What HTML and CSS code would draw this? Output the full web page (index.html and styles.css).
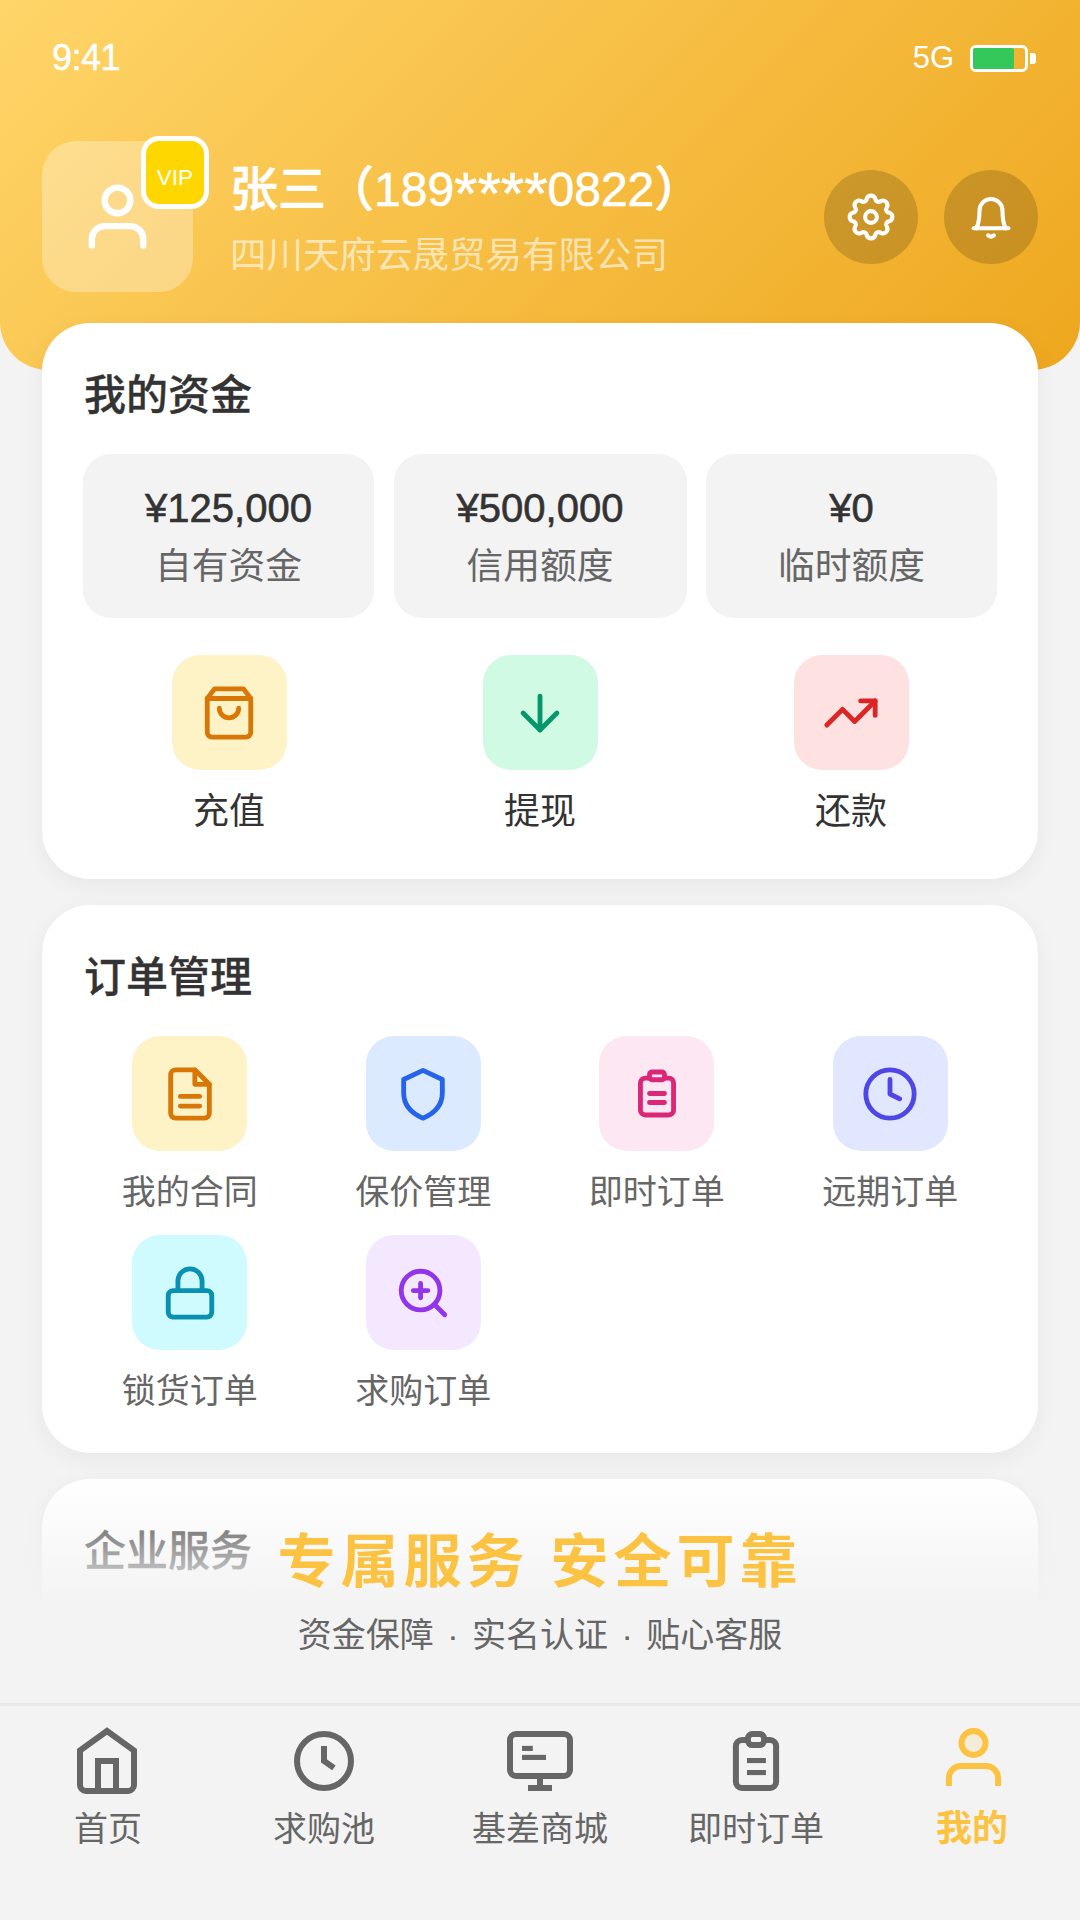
FILE: index.html
```html
<!DOCTYPE html>
<html lang="zh-CN">
<head>
    <meta charset="UTF-8">
    <meta name="viewport" content="width=device-width, initial-scale=1.0">
    <title>我的</title>
    <link rel="stylesheet" href="styles.css">
</head>
<body>
<div class="page">
    <header class="hero">
        <div class="status-bar">
            <span class="time">9:41</span>
            <div class="status-right">
                <span class="signal">5G</span>
                <span class="battery"><span class="battery-level"></span></span>
                <span class="battery-tip"></span>
            </div>
        </div>
        <div class="profile">
            <div class="avatar">
                <svg class="avatar-icon" viewBox="0 0 24 24" fill="none" stroke="#fff" stroke-width="2" stroke-linecap="round" stroke-linejoin="round">
                    <circle cx="12" cy="7" r="4"/>
                    <path d="M4 21v-2a4 4 0 0 1 4-4h8a4 4 0 0 1 4 4v2"/>
                </svg>
                <span class="vip">VIP</span>
            </div>
            <div class="profile-text">
                <div class="name">张三（189<span class="mask">****</span>0822）</div>
                <div class="company">四川天府云晟贸易有限公司</div>
            </div>
            <div class="round-btns">
                <button class="round-btn">
                    <svg viewBox="0 0 24 24" fill="none" stroke="#fff" stroke-width="1.9" stroke-linecap="round" stroke-linejoin="round">
                        <path d="M20.36 9.99A2.1 2.1 0 0 1 20.36 14.01A1.5 1.5 0 0 0 19.33 16.49A2.1 2.1 0 0 1 16.49 19.33A1.5 1.5 0 0 0 14.01 20.36A2.1 2.1 0 0 1 9.99 20.36A1.5 1.5 0 0 0 7.51 19.33A2.1 2.1 0 0 1 4.67 16.49A1.5 1.5 0 0 0 3.64 14.01A2.1 2.1 0 0 1 3.64 9.99A1.5 1.5 0 0 0 4.67 7.51A2.1 2.1 0 0 1 7.51 4.67A1.5 1.5 0 0 0 9.99 3.64A2.1 2.1 0 0 1 14.01 3.64A1.5 1.5 0 0 0 16.49 4.67A2.1 2.1 0 0 1 19.33 7.51A1.5 1.5 0 0 0 20.36 9.99z"/>
                        <circle cx="12" cy="12" r="2.7"/>
                    </svg>
                </button>
                <button class="round-btn">
                    <svg viewBox="0 0 24 24" fill="none" stroke="#fff" stroke-width="1.9" stroke-linecap="round" stroke-linejoin="round">
                        <path d="M4 17.200h16"/>
                        <path d="M5.200 17.200c1.200-2.200 1.500-4.500 1.500-8.200a5.300 5.300 0 0 1 10.600 0c0 3.700 .3 6 1.500 8.200"/>
                        <path d="M10.700 20.500a2 2 0 0 0 2.600 0"/>
                    </svg>
                </button>
            </div>
        </div>
    </header>

    <main class="content">
        <section class="card funds-card">
            <h2 class="card-title">我的资金</h2>
            <div class="funds">
                <div class="fund">
                    <div class="fund-value">¥125,000</div>
                    <div class="fund-label">自有资金</div>
                </div>
                <div class="fund">
                    <div class="fund-value">¥500,000</div>
                    <div class="fund-label">信用额度</div>
                </div>
                <div class="fund">
                    <div class="fund-value">¥0</div>
                    <div class="fund-label">临时额度</div>
                </div>
            </div>
            <div class="actions">
                <div class="action">
                    <div class="tile tile-amber">
                        <svg viewBox="0 0 24 24" fill="none" stroke="#d97706" stroke-width="2" stroke-linecap="round" stroke-linejoin="round">
                            <path d="M6 2 3 6v14a2 2 0 0 0 2 2h14a2 2 0 0 0 2-2V6l-3-4z"/>
                            <path d="M3 6h18"/>
                            <path d="M16 10a4 4 0 0 1-8 0"/>
                        </svg>
                    </div>
                    <span class="action-label">充值</span>
                </div>
                <div class="action">
                    <div class="tile tile-green">
                        <svg viewBox="0 0 24 24" fill="none" stroke="#059669" stroke-width="2" stroke-linecap="round" stroke-linejoin="round">
                            <path d="M12 5v14"/>
                            <path d="m19 12-7 7-7-7"/>
                        </svg>
                    </div>
                    <span class="action-label">提现</span>
                </div>
                <div class="action">
                    <div class="tile tile-red">
                        <svg viewBox="0 0 24 24" fill="none" stroke="#dc2626" stroke-width="2" stroke-linecap="round" stroke-linejoin="round">
                            <path d="m22 7-8.500 8.500-5-5L2 17"/>
                            <path d="M16 7h6v6"/>
                        </svg>
                    </div>
                    <span class="action-label">还款</span>
                </div>
            </div>
        </section>

        <section class="card orders-card">
            <h2 class="card-title">订单管理</h2>
            <div class="order-grid">
                <div class="order">
                    <div class="tile tile-amber">
                        <svg viewBox="0 0 24 24" fill="none" stroke="#d97706" stroke-width="2" stroke-linecap="round" stroke-linejoin="round">
                            <path d="M14 2H6a2 2 0 0 0-2 2v16a2 2 0 0 0 2 2h12a2 2 0 0 0 2-2V8z"/>
                            <path d="M14 2v6h6"/>
                            <path d="M8 13h8"/>
                            <path d="M8 17h8"/>
                        </svg>
                    </div>
                    <span class="order-label">我的合同</span>
                </div>
                <div class="order">
                    <div class="tile tile-blue">
                        <svg viewBox="0 0 24 24" fill="none" stroke="#2563eb" stroke-width="2" stroke-linecap="round" stroke-linejoin="round">
                            <path d="M12 2.200 20 6v5.500c0 5.200-3.400 8.600-8 10.500-4.600-1.900-8-5.300-8-10.500V6z"/>
                        </svg>
                    </div>
                    <span class="order-label">保价管理</span>
                </div>
                <div class="order">
                    <div class="tile tile-pink">
                        <svg viewBox="0 0 24 24" fill="none" stroke="#db2777" stroke-width="2" stroke-linecap="round" stroke-linejoin="round">
                            <rect x="5.150" y="5.400" width="13.700" height="15.300" rx="2"/>
                            <rect x="8.900" y="2.900" width="6.200" height="3.200" rx="1" fill="#fce7f3"/>
                            <path d="M8.900 11.800h6.200"/>
                            <path d="M8.900 15.500h6.200"/>
                        </svg>
                    </div>
                    <span class="order-label">即时订单</span>
                </div>
                <div class="order">
                    <div class="tile tile-indigo">
                        <svg viewBox="0 0 24 24" fill="none" stroke="#4f46e5" stroke-width="2" stroke-linecap="round" stroke-linejoin="round">
                            <circle cx="12" cy="12" r="10"/>
                            <path d="M12 6v6l4 2"/>
                        </svg>
                    </div>
                    <span class="order-label">远期订单</span>
                </div>
                <div class="order">
                    <div class="tile tile-cyan">
                        <svg viewBox="0 0 24 24" fill="none" stroke="#0891b2" stroke-width="2" stroke-linecap="round" stroke-linejoin="round">
                            <rect x="3" y="11" width="18" height="11" rx="2"/>
                            <path d="M7 11V7a5 5 0 0 1 10 0v4"/>
                        </svg>
                    </div>
                    <span class="order-label">锁货订单</span>
                </div>
                <div class="order">
                    <div class="tile tile-purple">
                        <svg viewBox="0 0 24 24" fill="none" stroke="#9333ea" stroke-width="2" stroke-linecap="round" stroke-linejoin="round">
                            <circle cx="11" cy="11" r="8"/>
                            <path d="m21 21-4.300-4.300"/>
                            <path d="M11 8v6"/>
                            <path d="M8 11h6"/>
                        </svg>
                    </div>
                    <span class="order-label">求购订单</span>
                </div>
            </div>
        </section>

        <section class="card service-card">
            <h2 class="card-title">企业服务</h2>
            <div class="service-fade"></div>
            <div class="service-text">
                <div class="service-headline">专属服务 安全可靠</div>
                <div class="service-sub">资金保障 · 实名认证 · 贴心客服</div>
            </div>
        </section>
    </main>

    <nav class="tabbar">
        <div class="tab">
            <svg class="tab-home" viewBox="0 0 24 24" fill="none" stroke="#666" stroke-width="2">
                <path d="m3 8.500 9-6.500 9 6.500V20a2 2 0 0 1-2 2H5a2 2 0 0 1-2-2z"/>
                <path d="M9 22V12h6v10"/>
            </svg>
            <span>首页</span>
        </div>
        <div class="tab">
            <svg viewBox="0 0 24 24" fill="none" stroke="#666" stroke-width="2">
                <circle cx="12" cy="12" r="9"/>
                <path d="M12 7v5l3.300 2.300"/>
            </svg>
            <span>求购池</span>
        </div>
        <div class="tab">
            <svg viewBox="0 0 24 24" fill="none" stroke="#666" stroke-width="2">
                <rect x="2" y="3" width="20" height="14" rx="2"/>
                <path d="M8 21h8"/>
                <path d="M12 17v4"/>
                <path d="M6 7.800h3.600" stroke-width="1.700"/>
                <path d="M6 10.800h8" stroke-width="1.700"/>
            </svg>
            <span>基差商城</span>
        </div>
        <div class="tab">
            <svg viewBox="0 0 24 24" fill="none" stroke="#666" stroke-width="2">
                <rect x="5.300" y="5" width="13.400" height="16" rx="2"/>
                <rect x="9.300" y="3" width="5.400" height="3.700" rx="1.500" fill="#f3f3f3"/>
                <path d="M9 11.850h6.300" stroke-width="1.700"/>
                <path d="M9 15.850h6.300" stroke-width="1.700"/>
            </svg>
            <span>即时订单</span>
        </div>
        <div class="tab tab-active">
            <svg viewBox="0 0 24 24" fill="none" stroke="#fcc342" stroke-width="2">
                <circle cx="12.500" cy="6" r="4" fill="#f4ebd8"/>
                <path d="M4.300 20.300v-2.600a4 4 0 0 1 4-4h8.400a4 4 0 0 1 4 4v2.600"/>
            </svg>
            <span>我的</span>
        </div>
    </nav>
</div>
</body>
</html>
```

FILE: styles.css
```css
/* General page */
* {
    box-sizing: border-box;
}

body {
    margin: 0;
    background-color: #f3f3f3;
    font-family: "Liberation Sans", "Noto Sans CJK SC", sans-serif;
    color: #333;
}

.page {
    width: 1080px;
    height: 1920px;
    display: flex;
    flex-direction: column;
    overflow: hidden;
}

/* Orange header */
.hero {
    height: 370px;
    flex-shrink: 0;
    padding: 38px 42px 0;
    background: linear-gradient(135deg, #ffd569 0%, #eea71e 100%);
    border-radius: 0 0 48px 48px;
    color: #fff;
}

.status-bar {
    display: flex;
    justify-content: space-between;
    align-items: center;
    padding: 0 2px 0 10px;
    height: 40px;
}

.time {
    font-size: 36px;
    letter-spacing: -0.5px;
    -webkit-text-stroke: 0.5px #fff;
}

.status-right {
    display: flex;
    align-items: center;
}

.signal {
    font-size: 31px;
    margin-right: 16px;
}

.battery {
    width: 58px;
    height: 27px;
    border: 3px solid #fff;
    border-radius: 6px;
    display: block;
}

.battery-level {
    display: block;
    width: 78%;
    height: 100%;
    background-color: #34c759;
    border-radius: 2px;
}

.battery-tip {
    width: 6px;
    height: 11px;
    margin-left: 2px;
    background-color: #fff;
    border-radius: 0 3px 3px 0;
}

.profile {
    display: flex;
    align-items: center;
    margin-top: 63px;
}

.avatar {
    position: relative;
    width: 151px;
    height: 151px;
    flex-shrink: 0;
    border-radius: 34px;
    background-color: rgba(255, 255, 255, 0.3);
    display: flex;
    align-items: center;
    justify-content: center;
}

.avatar-icon {
    width: 77px;
    height: 77px;
}

.vip {
    position: absolute;
    top: -5px;
    right: -16px;
    width: 68px;
    height: 73px;
    padding-top: 11px;
    border: 5px solid #fff;
    border-radius: 18px;
    background-color: #ffd700;
    color: #fff;
    font-size: 22.5px;
    display: flex;
    align-items: center;
    justify-content: center;
}

.profile-text {
    flex: 1;
    margin-left: 37px;
    padding-top: 8px;
}

.name {
    font-size: 48px;
    font-weight: 500;
    line-height: 60px;
    -webkit-text-stroke: 0.6px #fff;
    white-space: nowrap;
}

.mask {
    font-size: 60px;
    line-height: 0;
    vertical-align: -8px;
}

.company {
    font-size: 36.5px;
    line-height: 50px;
    margin-top: 11px;
    color: rgba(255, 255, 255, 0.6);
    white-space: nowrap;
}

.round-btns {
    display: flex;
    gap: 26px;
}

.round-btn {
    width: 94px;
    height: 94px;
    padding: 0;
    border: none;
    border-radius: 50%;
    background-color: rgba(0, 0, 0, 0.16);
    display: flex;
    align-items: center;
    justify-content: center;
}

.round-btn svg {
    width: 52px;
    height: 52px;
}

/* Cards */
.content {
    flex: 1;
    margin-top: -47px;
    padding: 0 42px;
    display: flex;
    flex-direction: column;
    gap: 26px;
    min-height: 0;
}

.card {
    background-color: #fff;
    border-radius: 48px;
    padding: 45px 42px 42px;
    box-shadow: 0 6px 24px rgba(0, 0, 0, 0.05);
}

.card-title {
    margin: 0;
    font-size: 42px;
    font-weight: 500;
    line-height: 56px;
    -webkit-text-stroke: 0.3px #333;
    color: #333;
}

.funds-card {
    height: 556px;
}

.funds {
    display: grid;
    grid-template-columns: 291px 293px 291px;
    justify-content: space-between;
    margin: 30px -1px 0;
}

.fund {
    height: 164px;
    border-radius: 28px;
    background-color: #f3f3f3;
    text-align: center;
    padding-top: 29px;
}

.fund-value {
    font-size: 40px;
    line-height: 50px;
    -webkit-text-stroke: 0.6px #333;
    color: #333;
}

.fund-label {
    font-size: 36.75px;
    line-height: 50px;
    margin-top: 9px;
    color: #666;
}

.actions {
    display: grid;
    grid-template-columns: repeat(3, 290px);
    justify-content: space-between;
    margin-top: 37px;
}

.action {
    display: flex;
    flex-direction: column;
    align-items: center;
}

.action-label {
    font-size: 36px;
    line-height: 50px;
    margin-top: 17px;
    color: #333;
}

.tile {
    width: 115px;
    height: 115px;
    border-radius: 28px;
    display: flex;
    align-items: center;
    justify-content: center;
}

.tile svg {
    width: 58px;
    height: 58px;
}

.tile-amber { background-color: #fef3c7; }
.tile-green { background-color: #d1fae5; }
.tile-red { background-color: #fee2e2; }
.tile-blue { background-color: #dbeafe; }
.tile-pink { background-color: #fce7f3; }
.tile-indigo { background-color: #e0e7ff; }
.tile-cyan { background-color: #cffafe; }
.tile-purple { background-color: #f3e8ff; }

.orders-card {
    height: 548px;
}

.order-grid {
    display: grid;
    grid-template-columns: repeat(4, 1fr);
    row-gap: 20px;
    margin: 30px -11px 0 -11px;
}

.order {
    display: flex;
    flex-direction: column;
    align-items: center;
}

.order-label {
    font-size: 34px;
    line-height: 46px;
    margin-top: 18px;
    color: #666;
    white-space: nowrap;
}

/* Service card, cut off by the fade */
.service-card {
    position: relative;
    flex-shrink: 0;
    height: 200px;
}

.service-text {
    position: absolute;
    top: 45px;
    left: 0;
    width: 100%;
    text-align: center;
}

.service-headline {
    font-size: 58px;
    font-weight: 700;
    line-height: 76px;
    letter-spacing: 5px;
    color: #fcc342;
}

.service-sub {
    font-size: 34px;
    line-height: 46px;
    margin-top: 12px;
    word-spacing: 4px;
    color: #666;
}

.service-fade {
    position: absolute;
    left: -40px;
    right: -40px;
    top: 0;
    bottom: -40px;
    background: linear-gradient(to bottom, rgba(243, 243, 243, 0) 0, #f3f3f3 128px);
    pointer-events: none;
}

/* Bottom navigation */
.tabbar {
    height: 217px;
    flex-shrink: 0;
    position: relative;
    z-index: 2;
    display: grid;
    grid-template-columns: repeat(5, 216px);
    padding-top: 19px;
    background-color: #f3f3f3;
    border-top: 3px solid #e8e8e8;
}

.tab {
    display: flex;
    flex-direction: column;
    align-items: center;
    font-size: 34px;
    line-height: 46px;
    color: #666;
}

.tab svg {
    width: 72px;
    height: 72px;
    margin-bottom: 9px;
}

.tab .tab-home {
    margin-right: 2px;
}

.tab-active {
    color: #fcc342;
    font-size: 36px;
    font-weight: 700;
}
```
